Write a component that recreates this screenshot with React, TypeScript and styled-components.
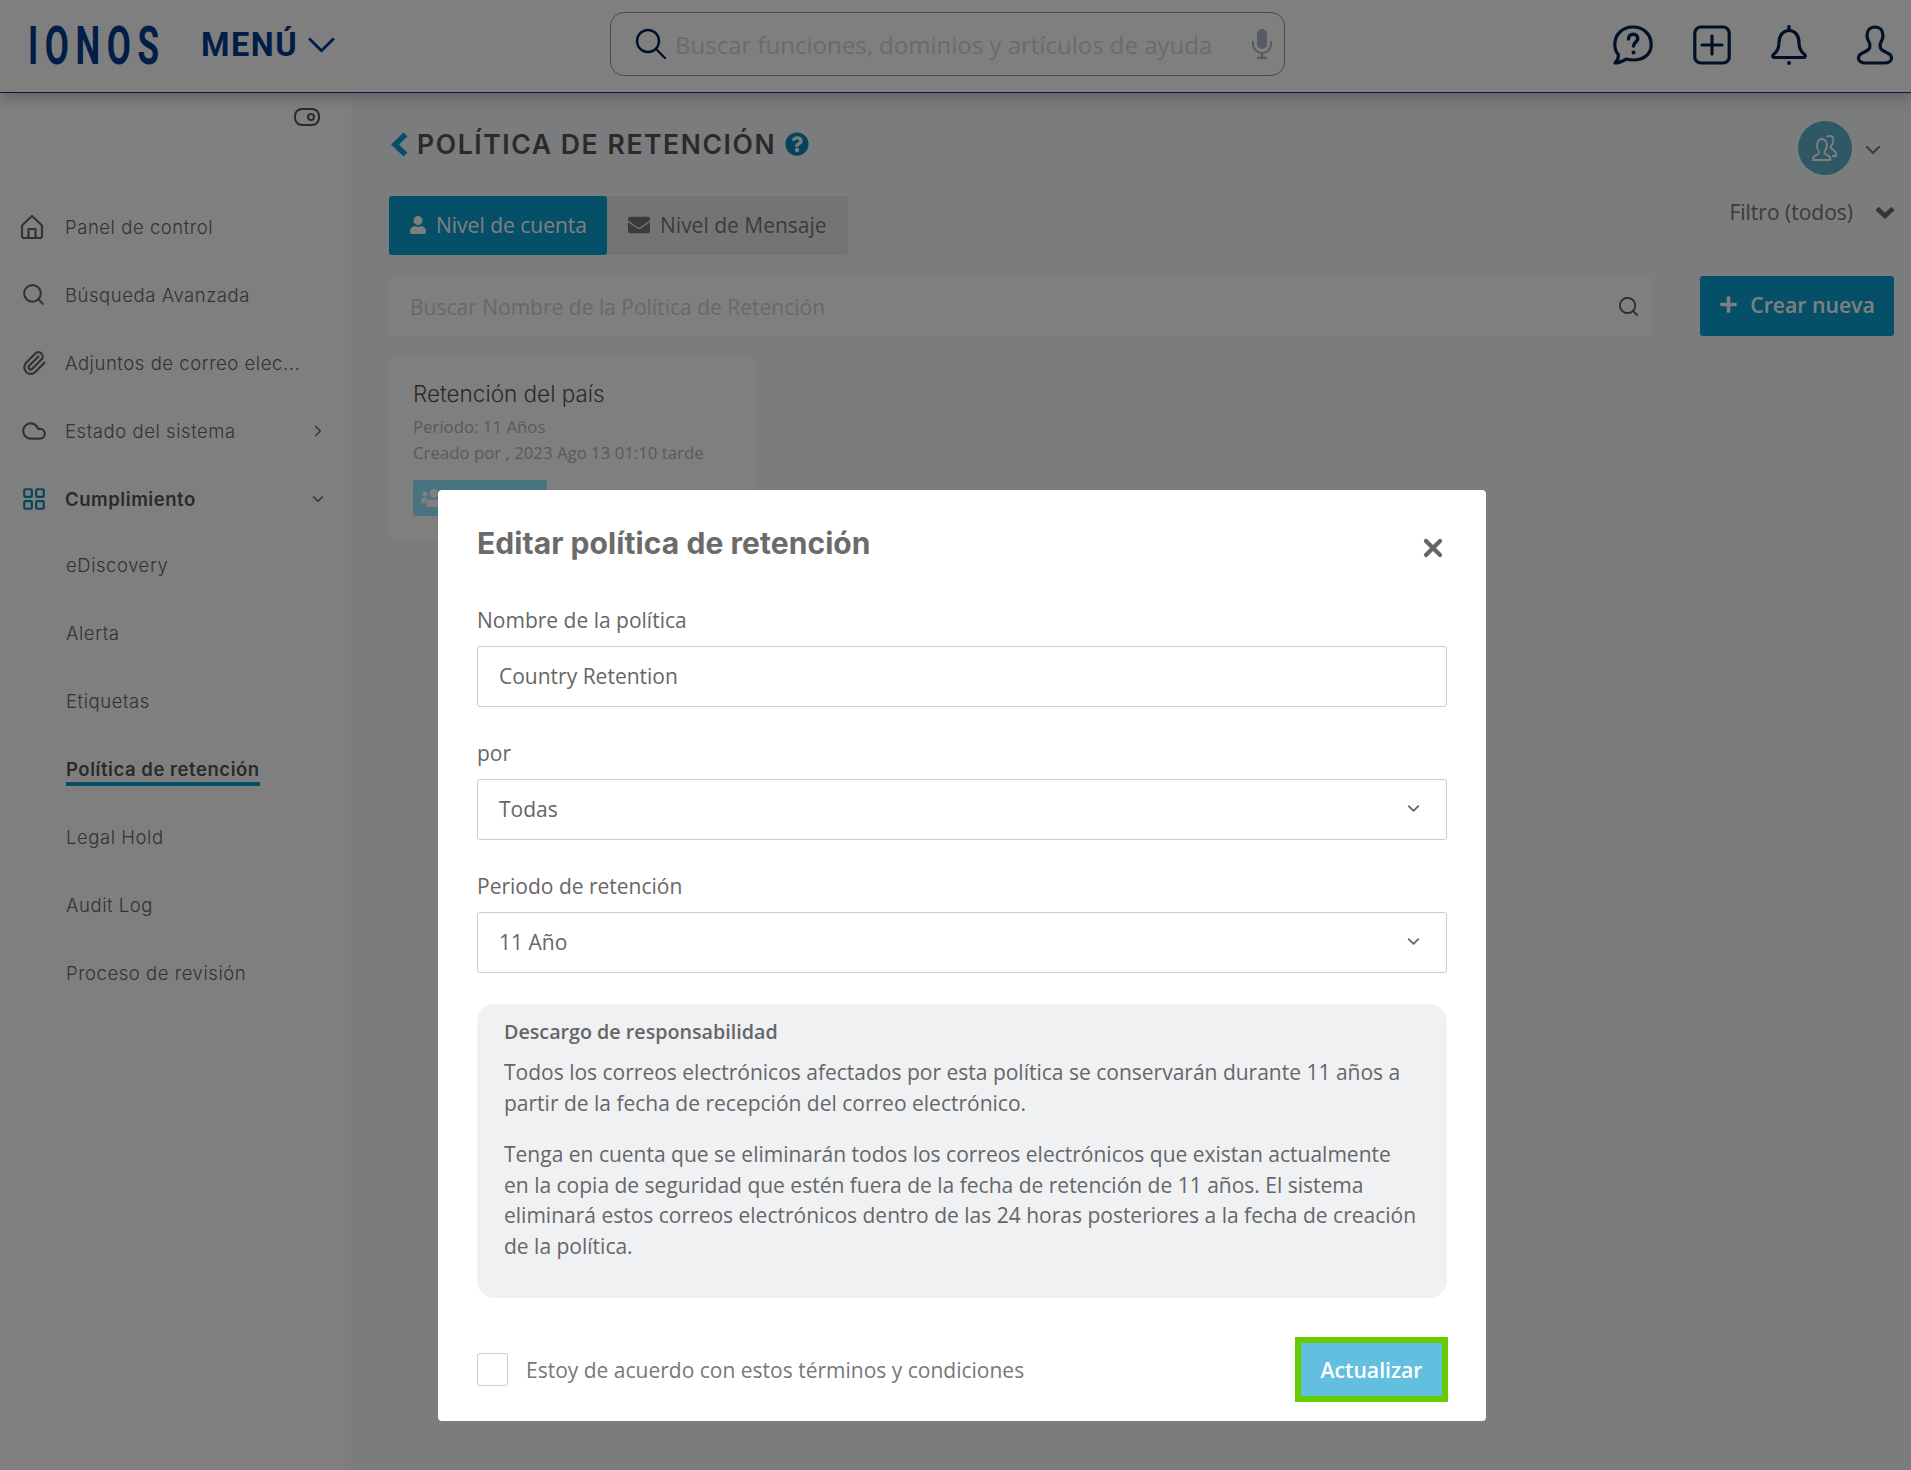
import React from 'react'
import styled, { createGlobalStyle } from 'styled-components'
import { ChevronDown, ChevronRight, Cloud, LayoutGrid, Paperclip, Search, X } from 'lucide-react'
import { FaEnvelope, FaPlus, FaQuestionCircle, FaUser, FaUsers } from 'react-icons/fa'

const GlobalStyle = createGlobalStyle`
  html, body {
    margin: 0;
    padding: 0;
    background: #fff;
  }
  * {
    box-sizing: border-box;
  }
`

const HelpIcon = () => (
  <svg width="40" height="40" viewBox="0 0 40 40" fill="none" stroke="#05214f" strokeWidth="3.2" strokeLinejoin="round">
    <path d="M2 38c2-2 3.500-5 3.500-8C3 27 1.800 23.500 1.800 19.500 1.800 9.500 9.500 2 20 2s18.200 7.500 18.200 17.500S30.500 35 20 35c-2.500 0-4.500-.4-6.500-1C10 36 6 38 2 38z" />
    <path d="M15.500 14c0-3 2-4.800 4.700-4.800s4.600 1.800 4.600 4.300c0 3.500-4.300 3.800-4.300 7.500" strokeLinecap="round" strokeWidth="3.400" />
    <circle cx="20.500" cy="27.500" r="2" fill="#05214f" stroke="none" />
  </svg>
)

const PlusBoxIcon = () => (
  <svg width="38" height="40" viewBox="0 0 38 40" fill="none" stroke="#05214f" strokeWidth="3.200" strokeLinecap="round">
    <rect x="1.800" y="2" width="34.400" height="36" rx="6" />
    <path d="M19 11v18M9 20h20" />
  </svg>
)

const BellIcon = () => (
  <svg width="36" height="40" viewBox="0 0 36 40" fill="none" stroke="#05214f" strokeWidth="3.200" strokeLinejoin="round" strokeLinecap="round">
    <path d="M18 1.500v4" />
    <path d="M2.500 29.500c4-3 5.500-6 5.500-12 0-7 4-12 10-12s10 5 10 12c0 6 1.500 9 5.500 12 1.500 1.500.5 3-1 3h-29c-1.500 0-2.500-1.500-1-3z" />
    <circle cx="18" cy="38" r="2" fill="#05214f" stroke="none" />
  </svg>
)

const UserIcon = () => (
  <svg width="36" height="40" viewBox="0 0 36 40" fill="none" stroke="#05214f" strokeWidth="3.200" strokeLinejoin="round">
    <path d="M18 2c-5 0-8 3.500-8 8.500 0 3 1 5 2 6.500 1 1.500 1 4 .5 6-.5 2-3 3-6 4.500-3.500 1.500-5 3.500-5 5.500 0 3 3 5 7 5h19c4 0 7-2 7-5 0-2-1.500-4-5-5.500-3-1.500-5.500-2.500-6-4.500-.5-2-.5-4.500.5-6 1-1.500 2-3.500 2-6.500C26 5.500 23 2 18 2z" />
  </svg>
)

const LensIcon = () => (
  <svg width="32" height="32" viewBox="0 0 32 32" fill="none" stroke="#05214f" strokeWidth="2.400" strokeLinecap="round">
    <circle cx="13" cy="13" r="11" />
    <path d="M21 21l9 9" />
  </svg>
)

const MicIcon = () => (
  <svg width="20" height="30" viewBox="0 0 20 30" fill="none" stroke="#aab4c6" strokeWidth="2">
    <rect x="5" y="0" width="10" height="20" rx="5" fill="#aab4c6" stroke="none" />
    <path d="M1 12v3c0 5 4 9 9 9s9-4 9-9v-3" />
    <path d="M10 24v4M5 29h10" strokeWidth="2.500" />
  </svg>
)

const MenuChevron = () => (
  <svg width="28" height="16" viewBox="0 0 28 16" fill="none" stroke="#003d8f" strokeWidth="3" strokeLinecap="round" strokeLinejoin="round">
    <path d="M2 2l12 12L26 2" />
  </svg>
)

const BackChevron = () => (
  <svg width="18" height="25" viewBox="0 0 18 25" fill="none" stroke="#0a9ccc" strokeWidth="5.500">
    <path d="M15.500 2.500L5 12.500l10.500 10" />
  </svg>
)

const FilterChevron = () => (
  <svg width="20" height="13" viewBox="0 0 20 13" fill="none" stroke="#6a6a6a" strokeWidth="4.500">
    <path d="M2 2.500l8 7.500 8-7.500" />
  </svg>
)

const HomeIcon = () => (
  <svg width="24" height="24" viewBox="-2 0 24 24" fill="none" stroke="#666" strokeWidth="2.200" strokeLinejoin="round">
    <path d="M-1 10.500L9 1l10 9.500V21a2 2 0 0 1-2 2H1a2 2 0 0 1-2-2z" />
    <path d="M5.500 23v-9h7v9" />
  </svg>
)

const ToggleIcon = () => (
  <svg width="26" height="18" viewBox="0 0 26 18" fill="none" stroke="#555" strokeWidth="2">
    <rect x="1" y="1" width="24" height="16" rx="7" />
    <circle cx="17" cy="9" r="3" />
  </svg>
)

const TeamIcon = () => (
  <svg width="26" height="28" viewBox="0 0 26 28" fill="none" stroke="#fff" strokeWidth="1.800" strokeLinejoin="round">
    <path d="M15 3c2-2 5-1 6 1 1 3 0 6-2 8v2c1 2 5 2 5 6v2h-4" />
    <path d="M10 5c3 0 5 3 5 6s-1 5-2.500 6.500V19c0 2 6 2 6 6v1H1v-1c0-4 6-4 6-6v-1.500C5.500 16 5 14 5 11s2-6 5-6z" />
  </svg>
)

const navItems = [
  { label: 'Panel de control', icon: <HomeIcon /> },
  { label: 'Búsqueda Avanzada', icon: <Search size={25} strokeWidth={2} /> },
  { label: 'Adjuntos de correo elec...', icon: <Paperclip size={26} strokeWidth={2} /> },
  { label: 'Estado del sistema', icon: <Cloud size={26} strokeWidth={2} />, arrow: <ChevronRight size={18} /> },
]

const subItems = ['eDiscovery', 'Alerta', 'Etiquetas', 'Política de retención', 'Legal Hold', 'Audit Log', 'Proceso de revisión']

const Field = ({ label, value, select }: { label: string; value: string; select?: boolean }) => (
  <FieldBox>
    <FieldLabel>{label}</FieldLabel>
    <InputBox>
      {value}
      {select && <ChevronDown size={19} color="#666" strokeWidth={2.300} />}
    </InputBox>
  </FieldBox>
)

const App = (): React.ReactElement => {
  return (
    <Page>
      <GlobalStyle />
      <Header>
        <LogoBox>
          <Logo>IONOS</Logo>
        </LogoBox>
        <MenuButton>
          MENÚ
          <MenuChevron />
        </MenuButton>
        <HeaderSearch>
          <LensIcon />
          <HeaderPlaceholder>Buscar funciones, dominios y artículos de ayuda</HeaderPlaceholder>
          <MicIcon />
        </HeaderSearch>
        <HeaderIcons>
          <HelpIcon />
          <PlusBoxIcon />
          <BellIcon />
          <UserSlot>
            <UserIcon />
          </UserSlot>
        </HeaderIcons>
      </Header>

      <Body>
        <Sidebar>
          <ToggleRow>
            <ToggleIcon />
          </ToggleRow>
          {navItems.map((item) => (
            <NavRow key={item.label}>
              <NavIcon>{item.icon}</NavIcon>
              <NavLabel>{item.label}</NavLabel>
              {item.arrow && <NavArrow>{item.arrow}</NavArrow>}
            </NavRow>
          ))}
          <NavRow>
            <NavIcon $active>
              <LayoutGrid size={26} strokeWidth={2} />
            </NavIcon>
            <NavLabel $bold>Cumplimiento</NavLabel>
            <NavArrow>
              <ChevronDown size={18} />
            </NavArrow>
          </NavRow>
          {subItems.map((item) => (
            <SubRow key={item}>
              <SubLabel $active={item === 'Política de retención'}>{item}</SubLabel>
            </SubRow>
          ))}
        </Sidebar>

        <Main>
          <TitleRow>
            <PageTitle>
              <BackChevron />
              <TitleText>POLÍTICA DE RETENCIÓN</TitleText>
              <FaQuestionCircle size={24} color="#0b88b5" />
            </PageTitle>
            <AvatarGroup>
              <Avatar>
                <TeamIcon />
              </Avatar>
              <ChevronDown size={24} strokeWidth={2} color="#777" />
            </AvatarGroup>
          </TitleRow>

          <TabsRow>
            <Tabs>
              <Tab $active>
                <FaUser size={18} />
                Nivel de cuenta
              </Tab>
              <Tab>
                <FaEnvelope size={22} />
                Nivel de Mensaje
              </Tab>
            </Tabs>
            <Filter>
              Filtro (todos)
              <FilterChevron />
            </Filter>
          </TabsRow>

          <Toolbar>
            <PolicySearch>
              Buscar Nombre de la Política de Retención
              <Search size={23} strokeWidth={1.8} color="#555" />
            </PolicySearch>
            <CreateButton>
              <FaPlus size={19} />
              Crear nueva
            </CreateButton>
          </Toolbar>

          <Card>
            <CardTitle>Retención del país</CardTitle>
            <CardMeta>Período: 11 Años</CardMeta>
            <CardMeta>Creado por , 2023 Ago 13 01:10 tarde</CardMeta>
            <CardBadge>
              <FaUsers size={26} />
            </CardBadge>
          </Card>
        </Main>
      </Body>

      <Overlay>
        <Modal>
          <ModalHead>
            <ModalTitle>Editar política de retención</ModalTitle>
            <X size={28} strokeWidth={3.6} color="#666" />
          </ModalHead>
          <Field label="Nombre de la política" value="Country Retention" />
          <Field label="por" value="Todas" select />
          <Field label="Periodo de retención" value="11 Año" select />
          <Notice>
            <NoticeTitle>Descargo de responsabilidad</NoticeTitle>
            <NoticeText>
              Todos los correos electrónicos afectados por esta política se conservarán durante 11 años a partir de la
              fecha de recepción del correo electrónico.
            </NoticeText>
            <NoticeText>
              Tenga en cuenta que se eliminarán todos los correos electrónicos que existan actualmente en la copia de
              seguridad que estén fuera de la fecha de retención de 11 años. El sistema eliminará estos correos
              electrónicos dentro de las 24 horas posteriores a la fecha de creación de la política.
            </NoticeText>
          </Notice>
          <ModalFooter>
            <Agreement>
              <Checkbox />
              Estoy de acuerdo con estos términos y condiciones
            </Agreement>
            <UpdateButton>Actualizar</UpdateButton>
          </ModalFooter>
        </Modal>
      </Overlay>
    </Page>
  )
}

const Page = styled.div`
  position: relative;
  width: 1911px;
  height: 1470px;
  overflow: hidden;
  display: flex;
  flex-direction: column;
  font-family: 'Open Sans', 'Noto Sans', sans-serif;
  color: #666;
`

const Header = styled.header`
  position: relative;
  z-index: 1;
  height: 93px;
  flex-shrink: 0;
  display: flex;
  align-items: center;
  padding: 0 18px 0 28px;
  background: #fff;
  border-bottom: 1px solid #0b3a75;
  box-shadow: 0 4px 14px rgba(0, 0, 0, 0.25);
`

const LogoBox = styled.div`
  width: 132px;
  flex-shrink: 0;
`

const Logo = styled.span`
  display: block;
  font-family: 'Roboto', sans-serif;
  font-size: 53px;
  font-weight: 700;
  line-height: 60px;
  letter-spacing: 10px;
  color: #003d8f;
  white-space: nowrap;
  transform: scaleX(0.66);
  transform-origin: left center;
`

const MenuButton = styled.div`
  width: 134px;
  flex-shrink: 0;
  display: flex;
  align-items: center;
  gap: 10px;
  margin-left: 41px;
  padding-bottom: 2px;
  font-family: 'Roboto', sans-serif;
  font-weight: 700;
  font-size: 32.500px;
  letter-spacing: 1.500px;
  color: #003d8f;
`

const HeaderSearch = styled.div`
  width: 675px;
  height: 64px;
  align-self: flex-start;
  margin: 12px 0 0 275px;
  display: flex;
  align-items: center;
  padding: 0 12px 0 24px;
  border: 1px solid #8a93a6;
  border-radius: 14px;
  background: #fff;
`

const HeaderPlaceholder = styled.span`
  flex: 1;
  margin-left: 8px;
  font-size: 24px;
  color: #d6d6d6;
  white-space: nowrap;
`

const HeaderIcons = styled.div`
  margin-left: auto;
  margin-bottom: 3px;
  display: flex;
  align-items: center;
  gap: 40px;
`

const UserSlot = styled.div`
  display: flex;
  margin-left: 10px;
`

const Body = styled.div`
  flex: 1;
  display: flex;
  min-height: 0;
`

const Sidebar = styled.nav`
  width: 351px;
  flex-shrink: 0;
  background: #fff;
  font-family: 'Inter', 'Roboto', sans-serif;
`

const ToggleRow = styled.div`
  height: 100px;
  display: flex;
  justify-content: flex-end;
  padding: 15px 31px 0 0;
`

const NavRow = styled.div`
  height: 67.9px;
  display: flex;
  align-items: center;
  padding-left: 21px;
  padding-right: 24px;
`

const NavIcon = styled.span<{ $active?: boolean }>`
  width: 44px;
  display: flex;
  align-items: center;
  color: ${(p) => (p.$active ? '#0b88b5' : '#666')};
`

const NavLabel = styled.span<{ $bold?: boolean }>`
  flex: 1;
  font-size: 18.500px;
  font-weight: ${(p) => (p.$bold ? 600 : 300)};
  letter-spacing: 0.55px;
  color: ${(p) => (p.$bold ? '#555' : '#666')};
  white-space: nowrap;
`

const NavArrow = styled.span`
  display: flex;
  color: #666;
`

const SubRow = styled.div`
  height: 67.9px;
  display: flex;
  align-items: center;
  padding-left: 66px;
`

const SubLabel = styled.span<{ $active?: boolean }>`
  font-size: 18.500px;
  font-weight: ${(p) => (p.$active ? 600 : 300)};
  letter-spacing: 0.55px;
  color: ${(p) => (p.$active ? '#555' : '#666')};
  padding-bottom: 2px;
  border-bottom: ${(p) => (p.$active ? '4px solid #0a9ccc' : '0')};
  margin-top: ${(p) => (p.$active ? '4px' : '0')};
`

const Main = styled.main`
  flex: 1;
  background: #f6f8fc;
  padding: 28px 17px 0 38px;
  min-width: 0;
`

const TitleRow = styled.div`
  height: 54px;
  display: flex;
  justify-content: space-between;
`

const PageTitle = styled.div`
  display: flex;
  align-items: center;
  gap: 9px;
  height: 46px;
  padding-left: 1px;
`

const TitleText = styled.h1`
  margin: 0;
  font-family: 'Inter', 'Roboto', sans-serif;
  font-size: 26.500px;
  font-weight: 600;
  letter-spacing: 1.600px;
  color: #555;
`

const AvatarGroup = styled.div`
  display: flex;
  align-items: center;
  gap: 9px;
  padding-right: 9px;

  > svg {
    margin-top: 3px;
  }
`

const Avatar = styled.div`
  width: 54px;
  height: 54px;
  border-radius: 50%;
  background: #5fb0cb;
  display: flex;
  align-items: center;
  justify-content: center;
`

const TabsRow = styled.div`
  margin-top: 21px;
  display: flex;
  justify-content: space-between;
`

const Tabs = styled.div`
  display: flex;
  height: 59px;
  background: #e9e9e9;
  border-radius: 3px;
`

const Tab = styled.div<{ $active?: boolean }>`
  display: flex;
  align-items: center;
  gap: ${(p) => (p.$active ? '9px' : '10px')};
  padding: 0 ${(p) => (p.$active ? '20px' : '21px')} 2px;
  font-size: 21px;
  border-radius: 3px;
  color: ${(p) => (p.$active ? '#fff' : '#777')};
  background: ${(p) => (p.$active ? '#0a9fd1' : 'transparent')};

  svg {
    color: ${(p) => (p.$active ? '#fff' : '#777')};
  }
`

const Filter = styled.div`
  display: flex;
  align-items: center;
  gap: 22px;
  height: 32px;
  margin-right: -1px;
  font-size: 21px;
  color: #777;
`

const Toolbar = styled.div`
  margin-top: 21px;
  display: flex;
  align-items: flex-end;
  gap: 46px;
`

const PolicySearch = styled.div`
  flex: 1;
  height: 58px;
  display: flex;
  align-items: center;
  justify-content: space-between;
  padding: 0 14px 1px 21px;
  background: #fff;
  border-radius: 3px;
  font-size: 21px;
  color: #d0d0d0;
`

const CreateButton = styled.div`
  width: 194px;
  height: 60px;
  display: flex;
  align-items: center;
  justify-content: center;
  gap: 12px;
  padding-bottom: 3px;
  background: #0a9fd1;
  border-radius: 3px;
  color: #fff;
  font-size: 21.200px;
  font-weight: 600;
`

const Card = styled.div`
  margin-top: 22px;
  width: 366px;
  height: 182px;
  padding: 20px 24px;
  background: #fff;
  border-radius: 5px;
`

const CardTitle = styled.div`
  font-family: 'Inter', 'Roboto', sans-serif;
  font-size: 22.500px;
  font-weight: 300;
  line-height: 30px;
  color: #555;
  margin-bottom: 6px;
  padding-top: 1px;
  height: 30px;
`

const CardMeta = styled.div`
  font-size: 16.800px;
  line-height: 26px;
  color: #b4b4b4;
`

const CardBadge = styled.div`
  margin-top: 14px;
  width: 134px;
  height: 36px;
  display: flex;
  align-items: center;
  padding-left: 8px;
  background: rgb(146, 232, 255);
  border-radius: 3px;
  color: #fff;
`

const Overlay = styled.div`
  position: absolute;
  inset: 0;
  z-index: 2;
  background: rgba(0, 0, 0, 0.5);
  padding: 490px 0 0 438px;
`

const Modal = styled.div`
  width: 1048px;
  height: 931px;
  padding: 0 39px;
  background: #fff;
  border-radius: 4px;
`

const ModalHead = styled.div`
  display: flex;
  justify-content: space-between;
  align-items: flex-end;
  height: 72px;
  margin-bottom: 44px;
`

const ModalTitle = styled.h2`
  margin: 0;
  align-self: center;
  padding-top: 34px;
  font-family: 'Inter', 'Roboto', sans-serif;
  font-size: 30px;
  font-weight: 700;
  letter-spacing: 0.07px;
  line-height: 36px;
  color: #6b6b6b;
`

const FieldBox = styled.div`
  margin-bottom: 32px;
`

const FieldLabel = styled.div`
  font-size: 21px;
  line-height: 28px;
  margin-bottom: 12px;
  color: #666;
`

const InputBox = styled.div`
  height: 61px;
  display: flex;
  align-items: center;
  justify-content: space-between;
  padding: 0 23px 2px 21px;
  border: 1px solid #ccc;
  border-radius: 3px;
  font-size: 21px;
  color: #666;
`

const Notice = styled.div`
  height: 294px;
  margin-top: -1px;
  padding: 13px 29px 0 27px;
  background: #f0f1f3;
  border-radius: 18px;
  color: #666;
`

const NoticeTitle = styled.div`
  font-size: 19.700px;
  font-weight: 600;
  line-height: 30px;
  margin-bottom: 10px;
`

const NoticeText = styled.p`
  margin: 0 0 21px;
  font-size: 21px;
  line-height: 30.500px;
`

const ModalFooter = styled.div`
  margin-top: 39px;
  display: flex;
  justify-content: space-between;
  align-items: center;
  margin-right: -1px;
`

const Agreement = styled.label`
  display: flex;
  align-items: center;
  gap: 18px;
  font-size: 21px;
  color: #777;
`

const Checkbox = styled.span`
  width: 31px;
  height: 33px;
  border: 1px solid #ccc;
  border-radius: 3px;
`

const UpdateButton = styled.div`
  width: 153px;
  height: 65px;
  display: flex;
  align-items: center;
  justify-content: center;
  border: 6px solid #66cc00;
  background: #62bfe0;
  color: #fff;
  font-size: 21.200px;
  font-weight: 600;
`

export default App
